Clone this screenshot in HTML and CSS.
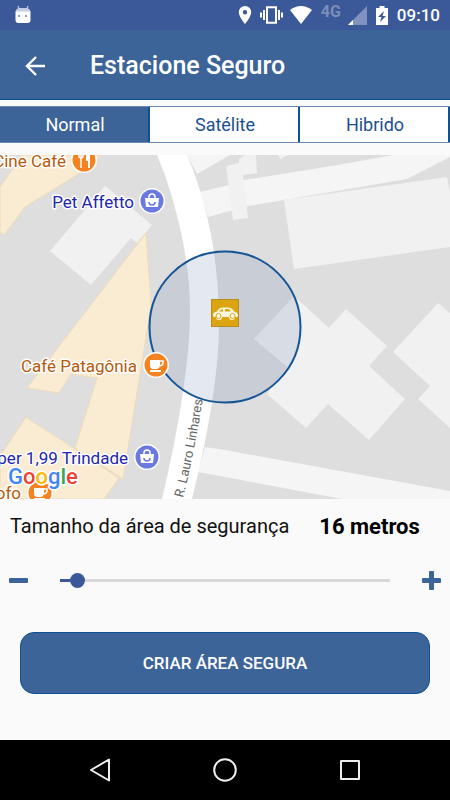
FILE: index.html
```
<!DOCTYPE html>
<html lang="pt-BR">
<head>
	<meta charset="UTF-8">
	<meta name="viewport" content="width=device-width, initial-scale=1.0">
	<title>Estacione Seguro</title>
	<link rel="stylesheet" href="styles.css">
</head>
<body>
	<div class="status">
		<svg class="status-app" width="16" height="18" viewBox="0 0 16 18">
			<path d="M3 0l1.500 4M13 0l-1.500 4" stroke="#c3cce2" stroke-width="1.200"/>
			<path d="M0.500 6Q1 2.500 4 2h8q3 .5 3.500 4z" fill="#c3cce2"/>
			<path d="M0.500 5.500h15V14q0 3-3 3h-9q-3 0-3-3z" fill="#fff"/>
			<path d="M3 9h2v2H3zM10 9h2v2h-2z" fill="#8c9cc6"/>
		</svg>
		<div class="status-icons">
			<svg width="16" height="18" viewBox="0 0 16 18"><path fill="#fff" fill-rule="evenodd" d="M8 0a6.200 6.200 0 0 0-6.200 6.200C1.800 10.700 8 18 8 18s6.200-7.300 6.200-11.800A6.200 6.200 0 0 0 8 0zm0 4a2.200 2.200 0 1 1 0 4.400A2.200 2.200 0 0 1 8 4z"/></svg>
			<svg width="23" height="18" viewBox="0 0 23 18"><path fill="none" stroke="#fff" stroke-width="2" d="M7 1.200h9v15.600H7zM4 4v10M19 4v10M1 6.500v5M22 6.500v5"/></svg>
			<svg width="24" height="18" viewBox="0 0 24 18"><path fill="#fff" d="M11 18L0 4Q11-4 22 4z"/></svg>
			<span class="status-net">4G</span>
			<svg width="19" height="19" viewBox="0 0 19 19"><path fill="#8292c0" d="M19 0v19H0z"/><path fill="#fff" d="M5 14v5H0z"/></svg>
			<svg width="16" height="19" viewBox="0 0 16 19"><path fill="#fff" fill-rule="evenodd" d="M5.500 0h5v2H14v17H2V2h3.500zM10 5l-6 6h3.500L6 16l6-6H8.500z"/></svg>
			<span class="status-time">09:10</span>
		</div>
	</div>

	<header class="topbar">
		<button class="back" type="button" aria-label="Voltar">
			<svg width="20" height="20" viewBox="0 0 20 20"><path fill="none" stroke="#fff" stroke-width="2.400" d="M20 10H2M11 1l-9 9 9 9"/></svg>
		</button>
		<h1>Estacione Seguro</h1>
	</header>

	<div class="tabs">
		<button class="tab active" type="button">Normal</button>
		<button class="tab" type="button">Satélite</button>
		<button class="tab" type="button">Hibrido</button>
	</div>

	<svg class="map" viewBox="0 155 450 344" preserveAspectRatio="xMidYMid slice">
		<defs>
			<path id="street" d="M183 498Q195 450 203 398"/>
			<g id="bag">
				<circle r="13" fill="#fff"/>
				<circle r="11.500" fill="#6b78e0"/>
				<path fill="#fff" d="M-7-3H7L6 6H-6z"/>
				<path fill="none" stroke="#fff" stroke-width="1.500" d="M-3-3v-1a3 3 0 0 1 6 0v1"/>
				<path fill="none" stroke="#6b78e0" stroke-width="1.500" d="M-3 1a3 3 0 0 0 6 0"/>
			</g>
			<g id="cup">
				<circle r="13" fill="#fff"/>
				<circle r="11.500" fill="#f58220"/>
				<path fill="#fff" d="M-6-5H4V0Q4 4 0 4H-3Q-6 4-6 0zM-6 5H5V7H-6z"/>
				<path fill="none" stroke="#fff" stroke-width="1.500" d="M4-4h3v2q0 2-3 3"/>
			</g>
		</defs>

		<rect class="ground" x="0" y="155" width="450" height="344"/>

		<!-- small streets -->
		<g class="lane">
			<path d="M187 155H230L197 174z"/>
			<path d="M200 192L225 186 244 180 338 165 393 155H450V157L407 179 284 200 248 206 208 217z"/>
			<path d="M205 447L225 450 450 491V499H342L225 477 198 472z"/>
		</g>

		<g class="building">
			<path d="M105 186L152 225 137 243 131 238 91 285 50 251z"/>
			<path d="M226 166L239 163 239 159 245 155H256L257 173 243 175 248 218 233 220z"/>
			<path d="M278 155H288L280 159z"/>
			<path d="M284 200L447 177 450 193V247L294 269z"/>
			<path d="M294 296L329 328 346 309 387 346 369 366 405 399 369 440 328 404 306 428 267 394 287 367 254 339z"/>
			<path d="M438 303L450 313V428L418 399 430 386 393 352z"/>
		</g>

		<g class="shops">
			<path d="M0 187L22 155H100L92 165 80 173 25 207 4 235 0 232z"/>
			<path d="M146 233L151 303 148 325 123 479 75 448 97 378 71 374 59 393 27 388z"/>
			<path d="M26 417L119 478 104 499H0V456z"/>
		</g>

		<path class="road" d="M157 155L166 178Q190 250 190 310Q190 380 162 499H192Q219 390 219 325Q219 230 187 155z"/>
		<text class="street-name"><textPath href="#street">R. Lauro Linhares</textPath></text>

		<circle class="area" cx="225" cy="327" r="75.500"/>

		<g class="car">
			<rect x="211.500" y="299.500" width="27" height="27" fill="#daa511" stroke="#b88d20"/>
			<path fill="#fff8e0" d="M213 315q0-3 4-3.500 2-4 6-4h5q4 0 6 4 4 .5 4 4.500l-1 1h-2a3 3 0 0 1-6 0h-7a3 3 0 0 1-6 0h-2z"/>
			<circle cx="218.500" cy="316" r="2.500" fill="#fff8e0" stroke="#daa511"/>
			<circle cx="232.500" cy="316" r="2.500" fill="#fff8e0" stroke="#daa511"/>
			<path fill="#daa511" d="M219 311.500q1-2.500 4-2.500v2.500zM225 309h3q2 0 3 2.500h-6z"/>
		</g>

		<text class="place food" x="66" y="167" text-anchor="end">Cine Café</text>
		<g transform="translate(84 160)">
			<circle r="13" fill="#fff"/>
			<circle r="11.500" fill="#f58220"/>
			<path fill="none" stroke="#fff" stroke-width="1.500" d="M-5-8v4q0 2 2 2t2-2v-4M-3-8V8"/>
			<path fill="#fff" d="M2-7q3-1 4 0V8H4V1H2z"/>
		</g>

		<text class="place shop" x="134" y="208" text-anchor="end">Pet Affetto</text>
		<use href="#bag" x="152" y="201"/>

		<text class="place food" x="137" y="372" text-anchor="end">Café Patagônia</text>
		<use href="#cup" x="156" y="365"/>

		<text class="place shop" x="128" y="464" text-anchor="end">per 1,99 Trindade</text>
		<use href="#bag" x="147" y="457"/>

		<text class="place food" x="21" y="499" text-anchor="end">ofo</text>
		<use href="#cup" x="40" y="493"/>

		<text class="google" x="8" y="484"><tspan fill="#4285f4">G</tspan><tspan fill="#ea4335">o</tspan><tspan fill="#fbbc05">o</tspan><tspan fill="#4285f4">g</tspan><tspan fill="#34a853">l</tspan><tspan fill="#ea4335">e</tspan></text>
	</svg>

	<main class="panel">
		<div class="size">
			<label for="range">Tamanho da área de segurança</label>
			<output id="size" for="range">16 metros</output>
		</div>
		<div class="slider">
			<button id="minus" type="button" aria-label="Diminuir">
				<svg width="19" height="19" viewBox="0 0 19 19"><rect y="7" width="19" height="5" rx="1"/></svg>
			</button>
			<input id="range" type="range" min="10" max="200" value="16">
			<button id="plus" type="button" aria-label="Aumentar">
				<svg width="19" height="19" viewBox="0 0 19 19"><rect y="7" width="19" height="5" rx="1"/><rect x="7" width="5" height="19" rx="1"/></svg>
			</button>
		</div>
		<button class="create" type="button">CRIAR ÁREA SEGURA</button>
	</main>

	<nav class="navbar">
		<button type="button" aria-label="Voltar"><svg width="24" height="24" viewBox="0 0 24 24"><path d="M21 1.500v21L3 12z"/></svg></button>
		<button type="button" aria-label="Início"><svg width="24" height="24" viewBox="0 0 24 24"><circle cx="12" cy="12" r="10.800"/></svg></button>
		<button type="button" aria-label="Recentes"><svg width="24" height="24" viewBox="0 0 24 24"><rect x="3" y="3" width="18" height="18"/></svg></button>
	</nav>

	<script>
		var range = document.getElementById("range");
		var size = document.getElementById("size");

		function update(){
			var part = (range.value - range.min) / (range.max - range.min);
			range.style.setProperty("--fill", part * 100 + "%");
			size.textContent = range.value + " metros";
		}

		range.oninput = update;
		document.getElementById("minus").onclick = function(){
			range.stepDown();
			update();
		};
		document.getElementById("plus").onclick = function(){
			range.stepUp();
			update();
		};
		update();
	</script>
</body>
</html>
```
FILE: styles.css
```
*{
	margin: 0;
	padding: 0;
	box-sizing: border-box;
}
body{
	display: flex;
	flex-direction: column;
	min-height: 100vh;
	background-color: #fafafa;
	font-family: Roboto, "Liberation Sans", sans-serif;
}
button{
	border: none;
	background: none;
	font-family: inherit;
	cursor: pointer;
}
svg{
	display: block;
}

/* status bar */
.status{
	display: flex;
	align-items: center;
	justify-content: space-between;
	height: 30px;
	padding: 0 10px 0 15px;
	background-color: #3b5998;
	color: #fff;
}
.status-icons{
	display: flex;
	align-items: center;
	gap: 7px;
}
.status-net{
	align-self: flex-start;
	color: #7c8dbb;
	font-size: 16px;
	line-height: 14px;
	font-weight: 700;
}
.status-time{
	font-size: 17px;
	font-weight: 500;
}

.topbar{
	display: flex;
	align-items: center;
	gap: 45px;
	height: 70px;
	padding: 2px 25px 0;
	background-color: #3d6499;
	border-bottom: 1px solid #04508f;
	color: #fff;
}
.topbar h1{
	font-size: 25px;
	font-weight: 500;
}

.tabs{
	display: flex;
	margin: 6px 0 12px;
	border: 1px solid #6a87b0;
	border-width: 1px 0;
	background-color: #fff;
}
.tab{
	flex: 1;
	height: 35px;
	padding-left: 2px;
	border-right: 2px solid #0d5293;
	color: #1c508f;
	font-size: 18px;
}
.tab.active{
	background-color: #3d6499;
	color: #fff;
}

/* map */
.map{
	width: 100%;
	height: 43vh;
}
.ground{
	fill: #dedede;
}
.lane{
	fill: #f5f5f5;
}
.building{
	fill: #f1f1f1;
}
.shops{
	fill: #faebd3;
	stroke: #eedcba;
}
.road{
	fill: #fff;
}
.street-name{
	fill: #666;
	font-size: 13px;
}
.area{
	fill: rgba(100, 126, 176, 0.18);
	stroke: #165595;
	stroke-width: 2px;
}
.place{
	font-size: 17px;
	stroke: #fff;
	stroke-width: 3px;
	stroke-linejoin: round;
	paint-order: stroke;
}
.food{
	fill: #b55a0b;
}
.shop{
	fill: #1d25b0;
}
.google{
	font-size: 22px;
	font-weight: 500;
	stroke: #fff;
	stroke-width: 3px;
	paint-order: stroke;
}

/* safe area form */
.panel{
	flex: 1;
	display: flex;
	flex-direction: column;
}
.size{
	display: flex;
	align-items: center;
	gap: 30px;
	height: 54px;
	padding: 0 10px;
	white-space: nowrap;
}
.size label{
	font-size: 20px;
	color: #111;
}
.size output{
	font-size: 22px;
	font-weight: 700;
	color: #000;
}
.slider{
	display: flex;
	align-items: center;
	gap: 32px;
	height: 55px;
	padding: 0 9px;
}
.slider svg{
	fill: #3d6499;
}
.slider input{
	flex: 1;
	min-width: 0;
	height: 15px;
	appearance: none;
	-webkit-appearance: none;
	background: linear-gradient(to right, #3b5998 var(--fill), #d8d8d8 var(--fill)) center / 100% 3px no-repeat;
}
.slider input::-webkit-slider-thumb{
	-webkit-appearance: none;
	width: 15px;
	height: 15px;
	border-radius: 50%;
	background-color: #3b5998;
}
.create{
	height: 62px;
	margin: 24px 20px 46px;
	border: 1px solid #0d5293;
	border-radius: 14px;
	background-color: #3d6499;
	color: #fff;
	font-size: 17px;
	font-weight: 500;
}

.navbar{
	display: flex;
	justify-content: center;
	align-items: center;
	gap: 101px;
	height: 60px;
	background-color: #000;
}
.navbar svg{
	fill: none;
	stroke: #eee;
	stroke-width: 2px;
	stroke-linejoin: round;
}
```
